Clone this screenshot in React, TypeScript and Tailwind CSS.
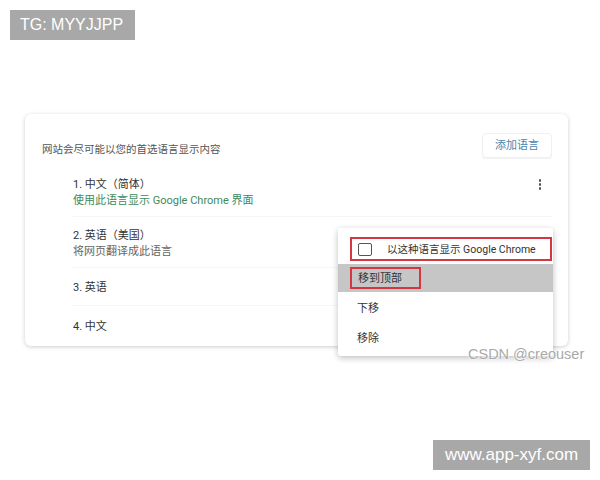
import React from 'react';

type Lang = { id: string; title: string; sub?: string; subTone?: 'green' | 'gray' };

const langs: Lang[] = [
  { id: 'zh-CN', title: '1. 中文（简体）', sub: '使用此语言显示 Google Chrome 界面', subTone: 'green' },
  { id: 'en-US', title: '2. 英语（美国）', sub: '将网页翻译成此语言', subTone: 'gray' },
  { id: 'en', title: '3. 英语' },
  { id: 'zh', title: '4. 中文' },
];

const font = { fontFamily: 'Roboto, "Noto Sans CJK SC", "Liberation Sans", sans-serif' };

export default function App() {
  return (
    <div className="relative w-[600px] h-[480px] bg-white overflow-hidden text-[#333]" style={font}>
      {/* top watermark */}
      <div className="ml-[10px] mt-[10px] w-[125px] h-[30px] bg-[#a8a8a8] text-white text-[16px] flex items-center pl-[10px] font-['Liberation_Sans',sans-serif]">
        TG: MYYJJPP
      </div>

      {/* Language card */}
      <div className="ml-[25px] mt-[74px] w-[543px] rounded-[6px] bg-white shadow-[0_1px_4px_rgba(0,0,0,0.2)] pl-[17px] pr-[16px] pb-[2px]">
        <div className="flex items-start justify-between pt-[19px] h-[52px]">
          <div className="text-[10.5px] text-[#555] mt-[9px]">网站会尽可能以您的首选语言显示内容</div>
          <button className="h-[25px] px-[12px] pt-[1px] rounded-[4px] border border-[#eef0f2] shadow-[0_1px_1px_rgba(0,0,0,0.06)] text-[11px] text-[#4a84ad] bg-white">
            添加语言
          </button>
        </div>

        <ul className="pl-[31px]">
          {langs.map((l, i) => (
            <li
              key={l.id}
              className={`flex items-center justify-between pt-[3px] ${l.sub ? 'h-[51px]' : 'h-[38px]'} ${i < langs.length - 1 ? 'border-b border-[#f5f5f5]' : ''}`}
            >
              <div className="flex flex-col">
                <div className="text-[11px] leading-[16px] text-[#333]">{l.title}</div>
                {l.sub && (
                  <div className={`text-[11px] leading-[16px] ${l.subTone === 'green' ? 'text-[#3d8a5c]' : 'text-[#666]'}`}>{l.sub}</div>
                )}
              </div>
              {i === 0 && (
                <div className="flex flex-col items-center gap-[1.5px] mr-[11px] mb-[16px]">
                  <span className="w-[2.5px] h-[2.5px] rounded-full bg-[#555]" />
                  <span className="w-[2.5px] h-[2.5px] rounded-full bg-[#555]" />
                  <span className="w-[2.5px] h-[2.5px] rounded-full bg-[#555]" />
                </div>
              )}
            </li>
          ))}
        </ul>
      </div>

      {/* Context menu */}
      <div className="absolute left-[338px] top-[228px] w-[215px] bg-white rounded-[3px] shadow-[0_2px_6px_rgba(0,0,0,0.25)] pt-[9px] pb-[4px]">
        <div className="ml-[12px] mr-[1px] h-[24px] border-2 border-[#d4373f] flex items-center pl-[6px]">
          <span className="w-[14px] h-[13px] border-[1.5px] border-[#555] rounded-[2px]" />
          <span className="ml-[15px] pt-[2px] text-[10.5px] text-[#333]">以这种语言显示 Google Chrome</span>
        </div>
        <div className="mt-[3px] h-[28px] bg-[#c6c6c6] flex items-center">
          <div className="ml-[12px] h-[22px] w-[71px] border-2 border-[#d4373f] flex items-center pl-[6px] pt-[2px] text-[11px] text-[#333]">
            移到顶部
          </div>
        </div>
        <div className="h-[30px] flex items-center pl-[19px] pt-[5px] text-[11px] text-[#333]">下移</div>
        <div className="h-[30px] flex items-center pl-[19px] pt-[5px] text-[11px] text-[#333]">移除</div>
      </div>

      {/* CSDN watermark */}
      <div className="absolute left-[468px] top-[344px] text-[14.5px] text-[#a9a9a9] font-['Liberation_Sans',sans-serif] [text-shadow:0_0_2px_#fff,0_0_2px_#fff]">
        CSDN @creouser
      </div>

      {/* bottom watermark */}
      <div className="absolute left-[433px] top-[440px] w-[157px] h-[30px] bg-[#a8a8a8] text-white text-[17px] flex items-center justify-center font-['Liberation_Sans',sans-serif]">
        www.app-xyf.com
      </div>
    </div>
  );
}
